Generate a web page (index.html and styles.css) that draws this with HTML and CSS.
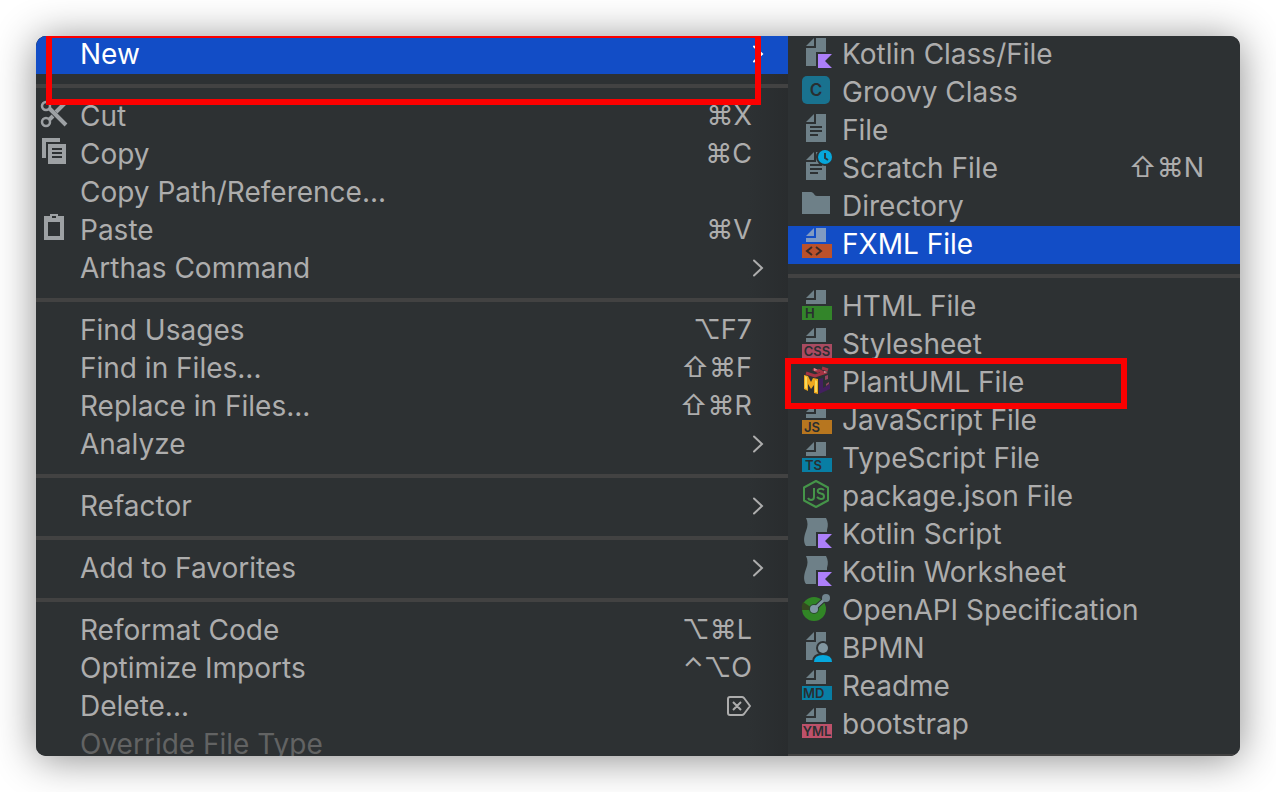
FILE: index.html
```html
<!DOCTYPE html>
<html lang="en">
<head>
<meta charset="utf-8">
<title>New file menu</title>
<link rel="stylesheet" href="styles.css">
</head>
<body>
<svg class="defs" aria-hidden="true">
  <symbol id="page-top" viewBox="0 0 32 32"><path d="M6 10L14 2V10ZM16 2H26V16H6V12H16Z"/></symbol>
  <symbol id="page" viewBox="0 0 32 32"><path d="M6 10L14 2V10ZM16 2H26V30H6V12H16Z"/></symbol>
  <symbol id="kotlin" viewBox="0 0 32 32"><path class="bg" d="M16 16H32V32H16Z"/><path class="purple" d="M18 18H32L25 25L32 32H18Z"/></symbol>
  <symbol id="script" viewBox="0 0 32 32"><path d="M6 2H26C28 6 28.500 9 27 14V30H6C3 26 4 20 6 15C8 10 8 6 6 2Z"/><use href="#kotlin"/></symbol>
  <symbol id="chevron" viewBox="0 0 12 18"><path d="M2 1.500L10 9L2 16.500"/></symbol>
</svg>
<main class="window">
  <nav class="menu menu-main" aria-label="Context menu">
    <button class="item selected"><span class="icon"></span><span class="label">New</span><svg class="chevron"><use href="#chevron"/></svg><span class="mark mark-new"></span></button>
    <hr>
    <button class="item"><svg class="icon action" viewBox="0 0 32 32"><g fill="none" stroke="currentColor"><circle cx="8" cy="8" r="4" stroke-width="2.500"/><circle cx="8" cy="24" r="4" stroke-width="2.500"/><path d="M11 10L28 27M11 22L15 18" stroke-width="4"/><path d="M18 14L27 5" stroke-width="4"/></g></svg><span class="label">Cut</span><kbd>⌘X</kbd></button>
    <button class="item"><svg class="icon action" viewBox="0 0 32 32"><path d="M4 2H22V6H8V22H4Z"/><path d="M10 8H28V28H10Z"/><path class="bg" d="M14 12H24V14H14ZM14 16H24V18H14ZM14 20H24V22H14Z"/></svg><span class="label">Copy</span><kbd>⌘C</kbd></button>
    <button class="item"><span class="icon"></span><span class="label">Copy Path/Reference...</span></button>
    <button class="item"><svg class="icon action" viewBox="0 0 32 32"><path fill-rule="evenodd" d="M6 4H12V2H20V4H26V28H6ZM10 10V24H22V10ZM14 4V6H18V4Z"/></svg><span class="label">Paste</span><kbd>⌘V</kbd></button>
    <button class="item"><span class="icon"></span><span class="label">Arthas Command</span><svg class="chevron"><use href="#chevron"/></svg></button>
    <hr>
    <button class="item"><span class="icon"></span><span class="label">Find Usages</span><kbd>⌥F7</kbd></button>
    <button class="item"><span class="icon"></span><span class="label">Find in Files...</span><kbd>⇧⌘F</kbd></button>
    <button class="item"><span class="icon"></span><span class="label">Replace in Files...</span><kbd>⇧⌘R</kbd></button>
    <button class="item"><span class="icon"></span><span class="label">Analyze</span><svg class="chevron"><use href="#chevron"/></svg></button>
    <hr>
    <button class="item"><span class="icon"></span><span class="label">Refactor</span><svg class="chevron"><use href="#chevron"/></svg></button>
    <hr>
    <button class="item"><span class="icon"></span><span class="label">Add to Favorites</span><svg class="chevron"><use href="#chevron"/></svg></button>
    <hr>
    <button class="item"><span class="icon"></span><span class="label">Reformat Code</span><kbd>⌥⌘L</kbd></button>
    <button class="item"><span class="icon"></span><span class="label">Optimize Imports</span><kbd>⌃⌥O</kbd></button>
    <button class="item"><span class="icon"></span><span class="label">Delete...</span><svg class="delete-key" viewBox="0 0 26 22" role="img" aria-label="Forward delete"><path d="M4 2H16Q17 2 18 3L24 11L18 19Q17 20 16 20H4Q2 20 2 18V4Q2 2 4 2ZM7 7L15 15M15 7L7 15"/></svg></button>
    <button class="item" disabled><span class="icon"></span><span class="label">Override File Type</span></button>
  </nav>
  <nav class="menu menu-new" aria-label="New">
    <button class="item"><svg class="icon" viewBox="0 0 32 32"><use href="#page"/><use href="#kotlin"/></svg><span class="label">Kotlin Class/File</span></button>
    <button class="item"><svg class="icon" viewBox="0 0 32 32"><rect x="2" y="2" width="28" height="28" rx="5" fill="#19728f"/><text class="glyph" x="16" y="22" font-size="17" text-anchor="middle">C</text></svg><span class="label">Groovy Class</span></button>
    <button class="item"><svg class="icon" viewBox="0 0 32 32"><use href="#page"/><path class="bg" d="M10 14H22V16H10ZM10 18H22V20H10ZM10 22H18V24H10Z"/></svg><span class="label">File</span></button>
    <button class="item"><svg class="icon" viewBox="0 0 32 32"><use href="#page"/><path class="bg" d="M10 14H22V16H10ZM10 18H22V20H10ZM10 22H18V24H10Z"/><circle class="bg" cx="25" cy="7" r="9"/><circle class="cyan" cx="25" cy="7" r="7"/><path d="M25 3V8L28 10" fill="none" stroke="#253c45" stroke-width="2"/></svg><span class="label">Scratch File</span><kbd>⇧⌘N</kbd></button>
    <button class="item"><svg class="icon" viewBox="0 0 32 32"><path d="M2 4H11C14 4 14 8 17 8H30V26H2Z"/></svg><span class="label">Directory</span></button>
    <button class="item selected"><svg class="icon" viewBox="0 0 32 32"><use href="#page-top"/><path fill="#bb512b" d="M2 18H32V32H2Z"/><path d="M12 21L7 25L12 29M16 21L21 25L16 29" fill="none" stroke="#3c2a26" stroke-width="2"/></svg><span class="label">FXML File</span></button>
    <hr>
    <button class="item"><svg class="icon" viewBox="0 0 32 32"><use href="#page-top"/><path fill="#33852a" d="M2 18H32V32H2Z"/><text class="glyph" x="5" y="30" font-size="13">H</text></svg><span class="label">HTML File</span></button>
    <button class="item"><svg class="icon" viewBox="0 0 32 32"><use href="#page-top"/><path fill="#a94b61" d="M2 18H32V32H2Z"/><text class="glyph" x="17" y="30" font-size="13" text-anchor="middle">CSS</text></svg><span class="label">Stylesheet</span></button>
    <button class="item"><svg class="icon" viewBox="0 0 32 32"><path fill="none" stroke="#a53343" stroke-width="3" d="M6 9L15 12L24 9L18 6M13 5L19 8M22 4L28 6"/><path fill="#d98990" d="M14 4L18 6L14 7ZM24 7L28 8L24 9Z"/><path fill="#f0a81e" d="M4 11L8 12L11 18L13 14L18 15V30L14 29V21L11 25L8 20V27L4 25Z"/><path fill="#f6d95b" d="M5 12L7 13V25L5 24ZM15 16L17 17V28L15 28Z"/><path fill="#43205f" d="M19 15L23 14V24L30 20V25L19 30Z"/><path fill="#93445f" d="M25 12L28 11V15L25 16ZM26 20L29 18V20L26 22Z"/></svg><span class="label">PlantUML File</span><span class="mark mark-uml"></span></button>
    <button class="item"><svg class="icon" viewBox="0 0 32 32"><use href="#page-top"/><path fill="#b7761f" d="M2 18H32V32H2Z"/><text class="glyph" x="4" y="30" font-size="13">JS</text></svg><span class="label">JavaScript File</span></button>
    <button class="item"><svg class="icon" viewBox="0 0 32 32"><use href="#page-top"/><path fill="#087ea4" d="M2 18H32V32H2Z"/><text class="glyph" x="5" y="30" font-size="13">TS</text></svg><span class="label">TypeScript File</span></button>
    <button class="item"><svg class="icon" viewBox="0 0 32 32"><g fill="none" stroke="#459449" stroke-width="2" stroke-linejoin="round"><path d="M16 3L28 9.500V22.500L16 29L4 22.500V9.500Z"/><path d="M14 10V19Q14 22 11 22Q9 22 8 20M24 12Q22 10 19.500 11Q17 12 18 14Q18.500 15 21 15.500Q24 16 24 18.500Q24 21 21 21Q19 21 17 19"/></g></svg><span class="label">package.json File</span></button>
    <button class="item"><svg class="icon" viewBox="0 0 32 32"><use href="#script"/></svg><span class="label">Kotlin Script</span></button>
    <button class="item"><svg class="icon" viewBox="0 0 32 32"><use href="#script"/></svg><span class="label">Kotlin Worksheet</span></button>
    <button class="item"><svg class="icon" viewBox="0 0 32 32"><circle cx="14" cy="17" r="12" fill="#318526"/><path fill="#35491f" d="M14 17L3 10Q1 14 2 18H10Z"/><circle cx="14" cy="17" r="5" fill="#284c2a"/><path d="M14 17L26 6" stroke="#2d3133" stroke-width="5"/><path d="M14 17L26 6" stroke="#7f95a1" stroke-width="3"/><circle cx="14" cy="17" r="4" fill="#8198a5"/><circle cx="26" cy="6" r="4" fill="#71858f"/></svg><span class="label">OpenAPI Specification</span></button>
    <button class="item"><svg class="icon" viewBox="0 0 32 32"><use href="#page"/><circle class="bg" cx="23" cy="18" r="7"/><path class="bg" d="M12 32Q12 23 23 23Q32 23 32 32Z"/><circle cx="23" cy="18" r="5" fill="#8297a1"/><path class="cyan" d="M14 32Q14 25 23 25Q32 25 32 32Z"/></svg><span class="label">BPMN</span></button>
    <button class="item"><svg class="icon" viewBox="0 0 32 32"><use href="#page-top"/><path fill="#087ea4" d="M2 18H32V32H2Z"/><text class="glyph" x="3" y="30" font-size="13">MD</text></svg><span class="label">Readme</span></button>
    <button class="item"><svg class="icon" viewBox="0 0 32 32"><use href="#page-top"/><path fill="#bd516a" d="M2 18H32V32H2Z"/><text class="glyph" x="17" y="30" font-size="13" text-anchor="middle">YML</text></svg><span class="label">bootstrap</span></button>
    <hr>
  </nav>
</main>
</body>
</html>
```

FILE: styles.css
```css
* { box-sizing: border-box; }

body {
  margin: 0;
  padding: 36px;
  background: #fff;
  font-family: Inter, "DejaVu Sans", sans-serif;
}

.defs { position: absolute; width: 0; height: 0; }

.window {
  display: grid;
  grid-template-columns: 752fr 452fr;
  height: calc(100vh - 72px);
  overflow: hidden;
  border-radius: 10px;
  background: #2d3133;
  box-shadow: 0 3px 40px rgba(0, 0, 0, .46);
}

.menu { min-width: 0; }

.menu-main {
  --icon-start: 2px;
  background: linear-gradient(to left, #292c2e, #2d3133 40px);
}

.menu-new {
  --icon-start: 12px;
  background: #2d3133;
}

.item {
  position: relative;
  display: flex;
  align-items: center;
  gap: 10px;
  width: 100%;
  height: 38px;
  padding: 0 24px 2px var(--icon-start);
  border: 0;
  background: none;
  color: #adadad;
  font: inherit;
  font-size: 28px;
  line-height: 36px;
  text-align: left;
  white-space: nowrap;
}

.item.selected { background: #124dc6; color: #fff; }
.item:disabled { color: #626363; }

.label { flex: 1; }

kbd {
  margin-right: 12px;
  font: inherit;
  font-size: 27px;
}

hr {
  height: 4px;
  margin: 10px 0;
  border: 0;
  background: #424242;
}

.icon {
  flex: none;
  align-self: flex-start;
  width: 32px;
  height: 32px;
  fill: #6e8088;
}

.action { fill: #9da1a4; color: #9da1a4; }
.selected .icon { fill: #819bc2; }
.icon .bg, .bg { fill: #2d3133; }
.purple { fill: #ad7ffa; }
.cyan { fill: #06a7dc; }

.glyph {
  fill: #292e31;
  font-family: Inter, sans-serif;
  font-weight: 600;
}

.chevron {
  width: 12px;
  height: 18px;
  fill: none;
  stroke: currentColor;
  stroke-width: 2;
  stroke-linecap: round;
}

.delete-key {
  width: 26px;
  height: 22px;
  margin-right: 12px;
  fill: none;
  stroke: currentColor;
  stroke-width: 2;
  stroke-linejoin: round;
}

.mark {
  position: absolute;
  z-index: 1;
  border: 6px solid #fb0000;
  pointer-events: none;
}

.mark-new { inset: -4px 27px -31px 10px; }
.mark-uml { top: -6px; bottom: -7px; left: -3px; width: 342px; }
```
